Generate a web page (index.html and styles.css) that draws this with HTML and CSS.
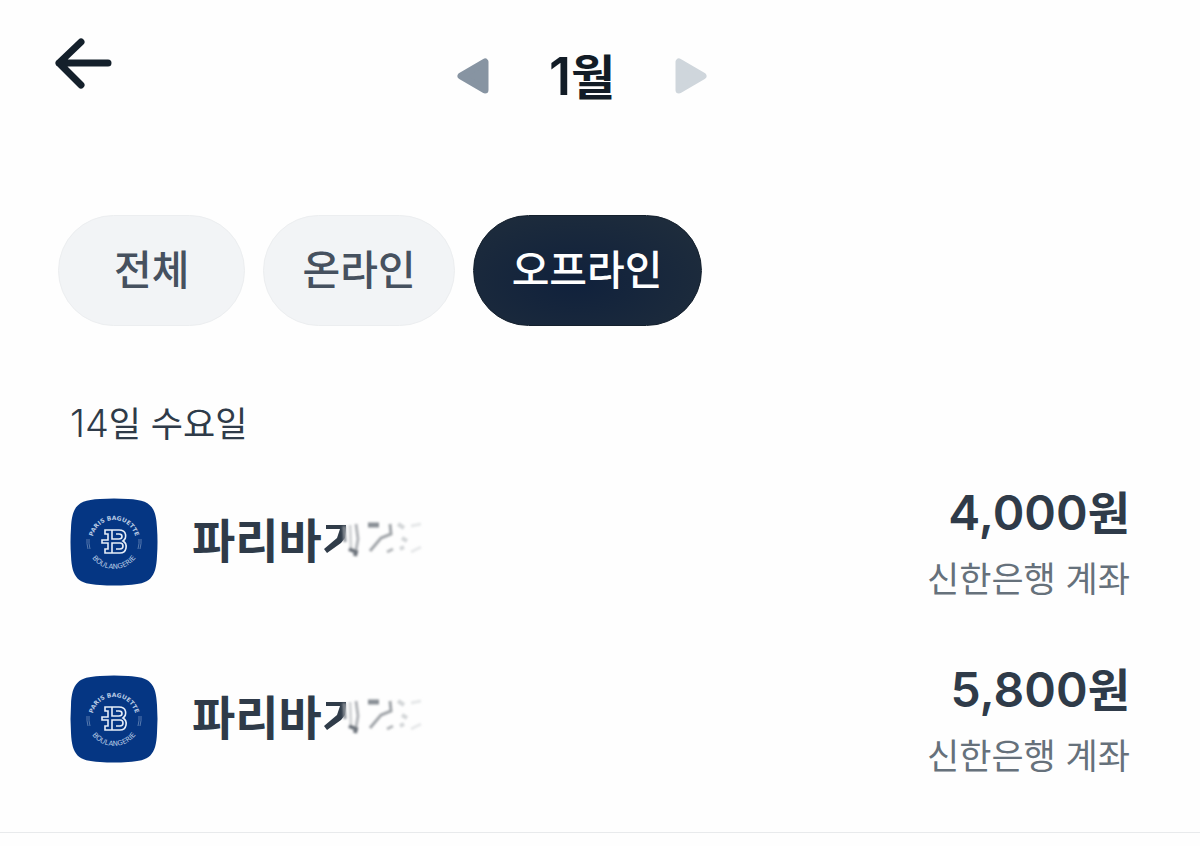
FILE: index.html
```html
<!DOCTYPE html>
<html lang="ko">
<head>
<meta charset="utf-8">
<meta name="viewport" content="width=device-width, initial-scale=1">
<title>1월 결제 내역</title>
<link rel="stylesheet" href="styles.css">
</head>
<body>
<svg class="defs" aria-hidden="true">
  <defs>
    <path id="arc-top" d="M22 44A22 22 0 0 1 66 44"/>
    <path id="arc-bottom" d="M17 44A27 27 0 0 0 71 44"/>
    <filter id="soft" x="-20%" y="-20%" width="140%" height="140%"><feGaussianBlur stdDeviation="0.9"/></filter>
    <symbol id="logo" viewBox="0 0 88 88">
      <path class="logo-tile" d="M30 1Q44 0 58 1C80 2 86 8 87 30Q88 44 87 58C86 80 80 86 58 87Q44 88 30 87C8 86 2 80 1 58Q0 44 1 30C2 8 8 2 30 1Z"/>
      <text class="logo-text"><textPath href="#arc-top" startOffset="50%">PARIS BAGUETTE</textPath></text>
      <text class="logo-text logo-text-bottom"><textPath href="#arc-bottom" startOffset="50%">BOULANGERIE</textPath></text>
      <g class="logo-mark">
        <path d="M35 32H49C57 32 57 40 53 43C58 46 57 55 50 55H35V51H38V45H32V42H38V36H35Z"/>
        <path d="M42 32V41H49C53 41 53 36 49 36H46M42 55V45H50C54 45 54 51 50 51H46"/>
      </g>
      <path class="logo-side" d="M17 41Q16.500 45 18 51M19 41Q18.500 45 20 51M71 41Q71.500 45 70 51M69 41Q69.500 45 68 51"/>
    </symbol>
    <symbol id="smudge" viewBox="0 0 104 52">
      <path class="smudge-dark" d="M2 9H22L21 22L17 27L3 37L0 33L13 22L16 13H2Z"/>
      <g filter="url(#soft)" fill="none">
        <path d="M20 10L21 26" stroke="#8c9299" stroke-width="3"/>
        <path d="M26 9L27 32" stroke="#d3d5d7" stroke-width="3"/>
        <path d="M32 8L34 23L31 40" stroke="#b3b6ba" stroke-width="3"/>
        <path d="M25 33L32 36L31 40" stroke="#6e757d" stroke-width="4"/>
        <path d="M44 9H55" stroke="#898f95" stroke-width="5"/>
        <path d="M66 8L67 18L57 22L46 35" stroke="#a2a6aa" stroke-width="3"/>
        <path d="M63 36L69 33" stroke="#b5b8bb" stroke-width="3"/>
        <path d="M74 8L80 12M78 22L83 25M76 33L80 31" stroke="#d3d6d8" stroke-width="4"/>
        <path d="M87 10L97 8M87 36L97 31" stroke="#e6e8e9" stroke-width="3"/>
      </g>
    </symbol>
  </defs>
</svg>

<header class="top">
  <button class="icon-button back" type="button" aria-label="뒤로">
    <svg width="58" height="52" viewBox="0 0 58 52"><path class="back-line" d="M27 4L5 25L27 47M5 25H54"/></svg>
  </button>
  <nav class="month" aria-label="월 선택">
    <button class="icon-button" type="button" aria-label="이전 달">
      <svg width="32" height="36" viewBox="0 0 32 36"><path class="prev" d="M28 4V32L4 18Z"/></svg>
    </button>
    <h1 class="month-title"><span class="num">1</span>월</h1>
    <button class="icon-button" type="button" aria-label="다음 달">
      <svg width="32" height="36" viewBox="0 0 32 36"><path class="next" d="M4 4V32L28 18Z"/></svg>
    </button>
  </nav>
</header>

<main class="content">
  <div class="filters">
    <button class="pill" type="button">전체</button>
    <button class="pill wide" type="button">온라인</button>
    <button class="pill wide active" type="button" aria-pressed="true">오프라인</button>
  </div>
  <section class="day">
    <h2 class="date"><span class="num">14</span>일 수요일</h2>
    <ul class="list">
      <li class="item">
        <svg class="logo" role="img" aria-label="Paris Baguette"><use href="#logo"/></svg>
        <div class="store"><span class="store-name">파리바</span><svg class="smudge" aria-hidden="true"><use href="#smudge"/></svg></div>
        <div class="payment">
          <div class="amount"><span class="num">4,000</span>원</div>
          <div class="account">신한은행 계좌</div>
        </div>
      </li>
      <li class="item">
        <svg class="logo" role="img" aria-label="Paris Baguette"><use href="#logo"/></svg>
        <div class="store"><span class="store-name">파리바</span><svg class="smudge" aria-hidden="true"><use href="#smudge"/></svg></div>
        <div class="payment">
          <div class="amount"><span class="num">5,800</span>원</div>
          <div class="account">신한은행 계좌</div>
        </div>
      </li>
    </ul>
  </section>
</main>
</body>
</html>
```
FILE: styles.css
```css
* { box-sizing: border-box; }

body {
  margin: 0;
  background: #fefefe;
  color: #2f3b49;
  font-family: "Noto Sans CJK KR", sans-serif;
}

.defs { position: absolute; width: 0; height: 0; }

h1, h2, ul { margin: 0; padding: 0; font-weight: inherit; }

button { font: inherit; cursor: pointer; }

svg { display: block; }

.num { font-family: Inter, sans-serif; }

.icon-button {
  padding: 0;
  border: 0;
  background: none;
}

.top {
  display: grid;
  grid-template-columns: 1fr auto 1fr;
  padding: 38px 90px 0 54px;
}

.back { justify-self: start; align-self: start; }

.back-line {
  fill: none;
  stroke: #14202b;
  stroke-width: 7;
  stroke-linecap: round;
  stroke-linejoin: round;
}

.month {
  display: flex;
  align-items: center;
  gap: 60px;
  height: 76px;
}

.month-title {
  padding-bottom: 2px;
  color: #121c26;
  font-size: 48px;
  line-height: 60px;
  font-weight: 600;
}

.month-title .num { font-size: 52px; }

.prev, .next { stroke-width: 7; stroke-linejoin: round; }
.prev { fill: #8794a2; stroke: #8794a2; }
.next { fill: #cfd6dc; stroke: #cfd6dc; }

.filters {
  display: flex;
  gap: 18px;
  padding: 101px 58px 0;
}

.pill {
  height: 111px;
  padding: 0 55px 7px;
  border: 1px solid #eceef0;
  border-radius: 56px;
  background: #f2f4f6;
  color: #46515f;
  font-size: 41px;
  font-weight: 500;
  line-height: 60px;
}

.wide { padding: 0 38px 7px; }

.active {
  border-color: #14202d;
  background: radial-gradient(ellipse at 45% 60%, #10213c, #1f2d3c 90%);
  background-origin: border-box;
  color: #fff;
}

.day { padding: 66px 70px 0; }

.date {
  font-size: 35px;
  line-height: 60px;
  font-weight: 400;
}

.date .num { font-size: 38px; font-weight: 350; }

.list { list-style: none; }

.item {
  display: flex;
  align-items: center;
  gap: 34px;
  height: 177px;
}

.day::after {
  content: "";
  display: block;
  height: 1px;
  margin: 25px -70px 0;
  background: #e8eaec;
}

.logo { flex: none; width: 88px; height: 88px; }
.logo-tile { fill: #053683; }
.logo-text {
  fill: #b8cae3;
  font: bold 6px "DejaVu Sans", sans-serif;
  text-anchor: middle;
}
.logo-text-bottom { font-size: 7px; font-weight: normal; }
.logo-mark { fill: none; stroke: #e6eef8; stroke-width: 1.6; }
.logo-side { fill: none; stroke: #6c8bba; stroke-width: 0.8; }

.store {
  display: flex;
  flex: 1;
  align-items: center;
  gap: 2px;
  font-size: 47px;
  font-weight: 600;
  line-height: 64px;
}

.store-name { padding-bottom: 8px; }

.smudge { width: 104px; height: 52px; }
.smudge-dark { fill: #303c49; }

.payment { text-align: right; }

.amount {
  font-size: 46px;
  font-weight: 600;
  line-height: 68px;
}

.amount .num { font-size: 48px; }

.account {
  color: #66717b;
  font-size: 35px;
  font-weight: 400;
  line-height: 60px;
}
```
